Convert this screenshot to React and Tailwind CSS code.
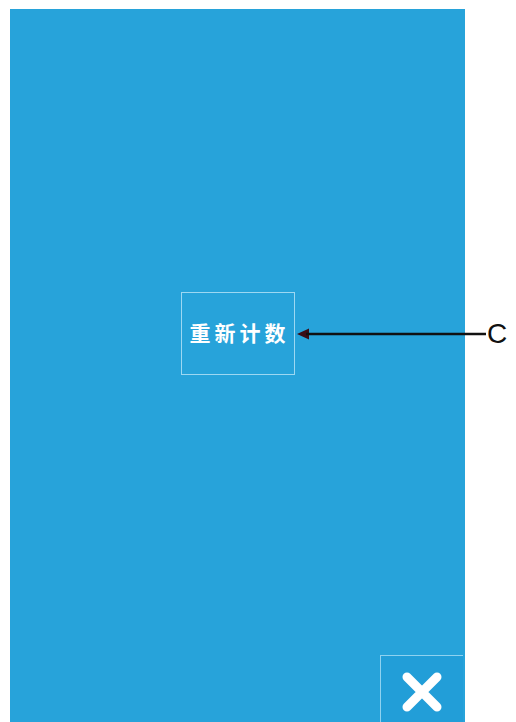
export default function App() {
    return (
        <div className="relative w-[516px] h-[722px] overflow-hidden bg-white pt-[9px] pl-[10px]" style={{ fontFamily: '"Liberation Sans", "Noto Sans CJK SC", sans-serif' }}>
            {/* screen panel */}
            <div className="flex flex-col w-[455px] h-[726px] bg-[#27a3da]">
                <div className="pt-[283px] pl-[171px]">
                    <button className="flex items-center justify-center w-[114px] h-[83px] border border-[#9dd8f2] text-white text-[21px] font-bold tracking-[4px] pl-[3px]">
                        重新计数
                    </button>
                </div>
                <div className="mt-auto self-end mr-[2px]">
                    <button className="flex items-start justify-center pt-[14px] w-[83px] h-[80px] border-l border-t border-[#8fd2f0] bg-[#229ed8]">
                        <svg width="44" height="44" viewBox="0 0 44 44">
                            <path d="M7 7 L37 37 M37 7 L7 37" stroke="white" strokeWidth="9" strokeLinecap="round" />
                        </svg>
                    </button>
                </div>
            </div>

            {/* callout C */}
            <div className="absolute left-[296px] top-[320px] flex items-center">
                <svg width="190" height="24" viewBox="0 0 190 24">
                    <polygon points="1,12 13,6.5 13,17.5" fill="#3a0d18" />
                    <line x1="10" y1="12" x2="190" y2="12" stroke="#111" strokeWidth="2.5" />
                </svg>
                <span className="text-[28px] leading-none text-[#111] ml-[1px]">C</span>
            </div>
        </div>
    );
}
